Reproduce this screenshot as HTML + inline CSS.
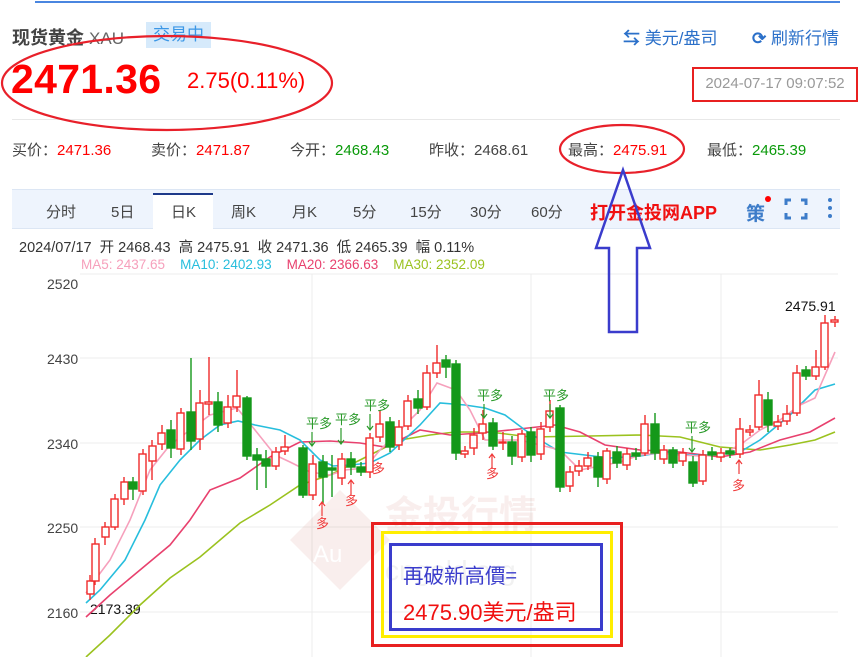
<!DOCTYPE html>
<html><head><meta charset="utf-8">
<style>
*{margin:0;padding:0;box-sizing:border-box}
body{width:863px;height:657px;background:#fff;position:relative;overflow:hidden;font-family:"Liberation Sans","Noto Sans CJK SC",sans-serif;color:#333}
.a{position:absolute;white-space:nowrap}
</style></head><body>
<div class="a" style="left:35px;top:1px;width:805px;height:2px;background:#4a86e0"></div>
<div class="a" style="left:12px;top:24px;font-size:18px;font-weight:bold;color:#444">现货黄金 <span style="font-weight:normal;color:#666;font-size:17px">XAU</span></div>
<div class="a" style="left:146px;top:22px;width:65px;height:26px;background:#d6eafb;color:#3b97e6;font-size:17px;line-height:26px;text-align:center">交易中</div>
<div class="a" style="left:11px;top:56px;font-size:41px;font-weight:bold;color:#f00;letter-spacing:0.3px">2471.36</div>
<div class="a" style="left:187px;top:68px;font-size:22px;color:#f00">2.75(0.11%)</div>
<div class="a" style="left:623px;top:24px;font-size:17px;color:#2b70c9"><span style="font-weight:bold">⇆</span> 美元/盎司</div>
<div class="a" style="left:752px;top:24px;font-size:17px;color:#2b70c9"><span style="font-weight:bold">⟳</span> 刷新行情</div>
<div class="a" style="left:692px;top:67px;width:166px;height:35px;border:2.5px solid #e82020;font-size:15px;color:#999;line-height:30px;text-align:center">2024-07-17 09:07:52</div>
<div class="a" style="left:12px;top:119px;width:828px;height:1px;background:#e8e8e8"></div>
<div class="a" style="left:12px;top:139px;font-size:15px;color:#444">买价：<span style="color:#f00">2471.36</span></div>
<div class="a" style="left:151px;top:139px;font-size:15px;color:#444">卖价：<span style="color:#f00">2471.87</span></div>
<div class="a" style="left:290px;top:139px;font-size:15px;color:#444">今开：<span style="color:#0a9a0a">2468.43</span></div>
<div class="a" style="left:429px;top:139px;font-size:15px;color:#444">昨收：2468.61</div>
<div class="a" style="left:568px;top:139px;font-size:15px;color:#444">最高：<span style="color:#f00">2475.91</span></div>
<div class="a" style="left:707px;top:139px;font-size:15px;color:#444">最低：<span style="color:#0a9a0a">2465.39</span></div>
<div class="a" style="left:12px;top:189px;width:828px;height:40px;background:#eef4fd;border-top:1px solid #dce6f4;border-bottom:1px solid #dce6f4"></div>
<div class="a" style="left:153px;top:193px;width:60px;height:36px;background:#fff;border-top:2px solid #1e3a8a"></div>
<div class="a" style="left:0;top:201px;font-size:15px;color:#444">
<span class="a" style="left:46px">分时</span><span class="a" style="left:111px">5日</span><span class="a" style="left:171px">日K</span><span class="a" style="left:231px">周K</span><span class="a" style="left:292px">月K</span><span class="a" style="left:353px">5分</span><span class="a" style="left:410px">15分</span><span class="a" style="left:470px">30分</span><span class="a" style="left:531px">60分</span></div>
<div class="a" style="left:590px;top:199px;font-size:18px;font-weight:bold;color:#f01010">打开金投网APP</div>
<div class="a" style="left:746px;top:199px;font-size:19px;color:#3d7cc9;font-weight:bold">策</div>
<div class="a" style="left:765px;top:196px;width:6px;height:6px;border-radius:3px;background:#f00"></div>
<svg class="a" style="left:784px;top:198px" width="24" height="22"><path d="M2 7V2H7M17 2H22V7M22 15V20H17M7 20H2V15" fill="none" stroke="#3d7cc9" stroke-width="3"/></svg>
<div class="a" style="left:828px;top:198px;width:4px;height:4px;background:#3d7cc9;border-radius:2px;box-shadow:0 8px 0 #3d7cc9,0 16px 0 #3d7cc9"></div>
<div class="a" style="left:19px;top:236px;font-size:14.5px;color:#333">2024/07/17&nbsp; 开 2468.43&nbsp; 高 2475.91&nbsp; 收 2471.36&nbsp; 低 2465.39&nbsp; 幅 0.11%</div>
<div class="a" style="left:81px;top:257px;font-size:13.5px"><span style="color:#f6a0bc">MA5: 2437.65</span>&nbsp;&nbsp;&nbsp; <span style="color:#27bedd">MA10: 2402.93</span>&nbsp;&nbsp;&nbsp; <span style="color:#e8416e">MA20: 2366.63</span>&nbsp;&nbsp;&nbsp; <span style="color:#9bc21f">MA30: 2352.09</span></div>
<svg class="a" style="left:0;top:0" width="863" height="657">
<g stroke="#ececec" stroke-width="1">
<line x1="80" y1="274" x2="838" y2="274"/><line x1="80" y1="358" x2="838" y2="358"/><line x1="80" y1="443" x2="838" y2="443"/><line x1="80" y1="527" x2="838" y2="527"/><line x1="80" y1="612" x2="838" y2="612"/>
<line x1="312" y1="274" x2="312" y2="657"/><line x1="531" y1="274" x2="531" y2="657"/><line x1="721" y1="274" x2="721" y2="657"/>
</g>
<g font-size="14" fill="#444" font-family="Liberation Sans,sans-serif">
<text x="47" y="289">2520</text><text x="47" y="364">2430</text><text x="47" y="449">2340</text><text x="47" y="533">2250</text><text x="47" y="618">2160</text>
<text x="90" y="614" fill="#111">2173.39</text><text x="785" y="311" fill="#111">2475.91</text>
</g>
<g opacity="0.08">
<path d="M290 540L340 490L390 540L340 590Z" fill="#c0392b"/>
<text x="313" y="562" font-size="24" fill="#fff">Au</text>
<text x="385" y="528" font-size="38" fill="#c0392b" font-family="Noto Sans CJK SC,sans-serif" font-weight="bold">金投行情</text>
<text x="385" y="580" font-size="28" fill="#555">cngold.org</text>
</g>
<g fill="none" stroke-width="1.6">
<polyline stroke="#9bc21f" points="86,657 110,635 140,605 170,578 200,557 240,523 270,505 300,485 330,475 360,460 380,450 400,440 430,435 455,432 490,432 530,437 590,436 640,435 680,437 720,447 760,450 790,445 815,440 835,432"/>
<polyline stroke="#e8416e" points="86,617 110,595 140,570 170,545 190,520 210,490 240,478 270,457 300,442 330,441 360,443 385,447 400,440 420,430 450,435 480,433 510,430 555,425 580,432 605,445 640,450 680,452 720,457 750,452 780,440 810,432 835,418"/>
<polyline stroke="#27bedd" points="86,603 100,590 125,560 145,520 160,485 180,460 200,440 220,425 238,421 255,425 280,430 300,440 320,460 333,466 350,465 370,463 390,453 420,425 440,403 465,405 485,408 505,415 525,430 545,443 560,452 585,455 610,458 640,456 665,452 690,455 710,455 740,452 760,440 790,415 815,390 835,384"/>
<polyline stroke="#f6a0bc" points="86,593 95,580 110,560 130,520 150,470 170,445 190,430 210,415 237,408 255,430 275,455 290,462 310,472 330,475 345,470 365,468 380,450 400,430 420,410 437,383 456,390 470,410 485,440 500,440 520,440 540,445 560,450 580,470 600,466 620,462 640,455 660,453 680,455 700,456 720,455 740,445 760,430 780,420 800,405 815,398 835,352"/>
</g>
<g stroke-width="1.4">
<g stroke="#f02a2a" fill="#fff">
<path d="M90 575V600M95 538V585M105 522V545M115 494V530M124 477V505M143 449V495M152 440V480M162 425V450M181 408V455M200 390V450M209 357V415M228 395V428M237 370V412M276 447V470M285 435V455M313 455V500M342 453V485M370 433V478M380 410V442M399 420V450M408 395V430M427 365V410M437 345V378M465 446V458M474 428V455M483 410V440M503 432V450M522 430V462M541 422V460M550 400V432M570 466V492M579 460V476M588 452V470M607 448V484M627 448V470M645 415V456M664 445V464M683 448V466M703 450V485M721 448V462M740 418V458M750 425V436M759 380V430M778 415V430M787 405V425M797 365V416M816 350V380M825 315V370M835 316V327"/>
<rect x="87" y="581" width="7" height="13"/><rect x="92" y="544" width="7" height="37"/><rect x="102" y="527" width="7" height="10"/><rect x="111" y="499" width="7" height="28"/><rect x="121" y="482" width="7" height="17"/><rect x="139" y="454" width="7" height="37"/><rect x="149" y="446" width="7" height="15"/><rect x="158" y="433" width="7" height="11"/><rect x="177" y="413" width="7" height="36"/><rect x="196" y="403" width="7" height="36"/><rect x="205" y="402" width="7" height="2"/><rect x="224" y="407" width="7" height="16"/><rect x="233" y="396" width="7" height="11"/><rect x="272" y="452" width="7" height="14"/><rect x="281" y="447" width="7" height="4"/><rect x="309" y="464" width="7" height="31"/><rect x="338" y="459" width="7" height="19"/><rect x="366" y="438" width="7" height="34"/><rect x="376" y="424" width="7" height="13"/><rect x="395" y="427" width="7" height="18"/><rect x="404" y="401" width="7" height="25"/><rect x="423" y="373" width="7" height="34"/><rect x="433" y="363" width="7" height="10"/><rect x="461" y="451" width="7" height="3"/><rect x="470" y="435" width="7" height="13"/><rect x="479" y="424" width="7" height="9"/><rect x="499" y="442" width="7" height="1"/><rect x="518" y="434" width="7" height="23"/><rect x="537" y="429" width="7" height="25"/><rect x="546" y="411" width="7" height="16"/><rect x="566" y="472" width="7" height="14"/><rect x="575" y="466" width="7" height="5"/><rect x="584" y="458" width="7" height="8"/><rect x="603" y="451" width="7" height="28"/><rect x="623" y="454" width="7" height="11"/><rect x="641" y="424" width="7" height="29"/><rect x="660" y="450" width="7" height="9"/><rect x="679" y="453" width="7" height="8"/><rect x="699" y="455" width="7" height="26"/><rect x="717" y="453" width="7" height="4"/><rect x="736" y="429" width="7" height="25"/><rect x="746" y="430" width="7" height="2"/><rect x="755" y="395" width="7" height="32"/><rect x="774" y="422" width="7" height="4"/><rect x="783" y="414" width="7" height="7"/><rect x="793" y="373" width="7" height="40"/><rect x="812" y="367" width="7" height="9"/><rect x="821" y="323" width="7" height="44"/><rect x="831" y="320" width="7" height="2"/>
</g>
<g stroke="#14981a" fill="#14981a">
<path d="M133 477V500M171 420V458M191 358V450M218 392V432M247 396V460M257 448V490M266 450V488M303 445V498M323 455V503M332 455V497M351 452V475M361 462V476M390 417V452M418 390V414M446 355V378M456 360V460M493 418V450M512 436V465M531 427V462M560 405V492M598 452V487M617 446V468M636 448V460M655 413V460M673 447V468M693 456V487M712 447V460M730 448V458M768 392V432M806 366V380"/>
<rect x="129" y="482" width="8" height="7"/><rect x="167" y="430" width="8" height="18"/><rect x="187" y="412" width="8" height="29"/><rect x="214" y="402" width="8" height="23"/><rect x="243" y="398" width="8" height="58"/><rect x="253" y="455" width="8" height="5"/><rect x="262" y="459" width="8" height="7"/><rect x="299" y="448" width="8" height="47"/><rect x="319" y="462" width="8" height="15"/><rect x="328" y="468" width="8" height="2"/><rect x="347" y="459" width="8" height="8"/><rect x="357" y="467" width="8" height="5"/><rect x="386" y="422" width="8" height="25"/><rect x="414" y="399" width="8" height="9"/><rect x="442" y="360" width="8" height="7"/><rect x="452" y="364" width="8" height="89"/><rect x="489" y="423" width="8" height="23"/><rect x="508" y="442" width="8" height="14"/><rect x="527" y="432" width="8" height="23"/><rect x="556" y="408" width="8" height="79"/><rect x="594" y="457" width="8" height="20"/><rect x="613" y="452" width="8" height="11"/><rect x="632" y="453" width="8" height="3"/><rect x="651" y="424" width="8" height="29"/><rect x="669" y="450" width="8" height="13"/><rect x="689" y="462" width="8" height="21"/><rect x="708" y="452" width="8" height="3"/><rect x="726" y="451" width="8" height="3"/><rect x="764" y="400" width="8" height="25"/><rect x="802" y="370" width="8" height="6"/>
</g>
</g>
<g font-size="13" font-family="Noto Sans CJK SC,sans-serif">
<g fill="#2a9a2a"><text x="306" y="428">平多</text><text x="335" y="424">平多</text><text x="364" y="410">平多</text><text x="477" y="400">平多</text><text x="543" y="400">平多</text><text x="685" y="432">平多</text></g>
<g stroke="#2a9a2a" fill="none" stroke-width="1.2"><path d="M312 432V446M309 442L312 446L315 442M341 428V444M338 440L341 444L344 440M370 414V430M367 426L370 430L373 426M484 404V418M481 414L484 418L487 414M550 404V418M547 414L550 418L553 414M692 436V452M689 448L692 452L695 448"/></g>
<g fill="#f03a3a"><text x="316" y="528">多</text><text x="345" y="505">多</text><text x="372" y="473">多</text><text x="486" y="478">多</text><text x="732" y="490">多</text></g>
<g stroke="#f03a3a" fill="none" stroke-width="1.2"><path d="M322 502V516M319 506L322 502L325 506M351 480V494M348 484L351 480L354 484M492 454V468M489 458L492 454L495 458M739 460V474M736 464L739 460L742 464"/></g>
</g>
<ellipse cx="167" cy="83" rx="165" ry="47" fill="none" stroke="#e8202a" stroke-width="2.2"/>
<ellipse cx="622" cy="149" rx="62" ry="24" fill="none" stroke="#e8202a" stroke-width="2.2"/>
<path d="M623 170L650 248H637V332H609V248H596Z" fill="none" stroke="#3a3ccc" stroke-width="2.5"/>
<rect x="372.5" y="523.5" width="249" height="122" fill="none" stroke="#e82020" stroke-width="3"/>
<rect x="382.5" y="532.5" width="229" height="104" fill="none" stroke="#ffee00" stroke-width="3"/>
<rect x="390.5" y="544.5" width="211" height="85" fill="none" stroke="#3a3ccc" stroke-width="3"/>
<text x="403" y="583" font-size="20.5" fill="#3a3ccc" font-family="Noto Sans CJK TC,sans-serif">再破新高價=</text>
<text x="403" y="620" font-size="22" fill="#f01010" font-family="Liberation Sans,Noto Sans CJK SC,sans-serif">2475.90美元/盎司</text>
</svg>
</body></html>
